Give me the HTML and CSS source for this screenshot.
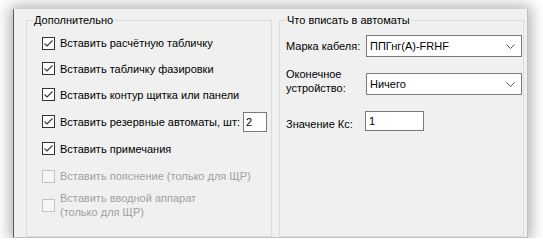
FILE: index.html
```html
<!DOCTYPE html>
<html lang="ru">
<head>
<meta charset="utf-8">
<link rel="stylesheet" href="styles.css">
</head>
<body>
<div class="frame">
  <fieldset class="group group-extra">
    <legend>Дополнительно</legend>
    <div class="rows">
      <div class="row"><span class="cb on"><svg viewBox="0 0 11 11"><polyline points="1.5,5.5 4,8 9.5,2.5"/></svg></span><span>Вставить расчётную табличку</span></div>
      <div class="row"><span class="cb on"><svg viewBox="0 0 11 11"><polyline points="1.5,5.5 4,8 9.5,2.5"/></svg></span><span>Вставить табличку фазировки</span></div>
      <div class="row"><span class="cb on"><svg viewBox="0 0 11 11"><polyline points="1.5,5.5 4,8 9.5,2.5"/></svg></span><span>Вставить контур щитка или панели</span></div>
      <div class="row"><span class="cb on"><svg viewBox="0 0 11 11"><polyline points="1.5,5.5 4,8 9.5,2.5"/></svg></span><span>Вставить резервные автоматы, шт:</span><span class="num">2</span></div>
      <div class="row"><span class="cb on"><svg viewBox="0 0 11 11"><polyline points="1.5,5.5 4,8 9.5,2.5"/></svg></span><span>Вставить примечания</span></div>
      <div class="row off"><span class="cb"></span><span>Вставить пояснение (только для ЩР)</span></div>
      <div class="row off"><span class="cb"></span><span>Вставить вводной аппарат<br>(только для ЩР)</span></div>
    </div>
  </fieldset>
  <fieldset class="group group-auto">
    <legend>Что вписать в автоматы</legend>
    <div class="form">
      <span class="lbl">Марка кабеля:</span>
      <div class="combo"><span>ППГнг(А)-FRHF</span><svg class="chev" viewBox="0 0 9 5"><polyline points="0.5,0.5 4.5,4.5 8.5,0.5"/></svg></div>
      <span class="lbl lbl-end">Оконечное<br>устройство:</span>
      <div class="combo"><span>Ничего</span><svg class="chev" viewBox="0 0 9 5"><polyline points="0.5,0.5 4.5,4.5 8.5,0.5"/></svg></div>
      <span class="lbl lbl-end">Значение Кс:</span>
      <div class="textbox">1</div>
    </div>
  </fieldset>
</div>
</body>
</html>
```

FILE: styles.css
```css
html, body {
  margin: 0;
  padding: 0;
  background: #ffffff;
}
body {
  font-family: "Liberation Sans", Arial, sans-serif;
  font-size: 11px;
  line-height: 14px;
  color: #000;
}
.frame {
  margin: 9px 0 0 13px;
  padding: 4px 3px 0 12px;
  background: #f0f0f0;
  border-left: 1px solid #5a5a5a;
  border-right: 1px solid #c0c0c0;
  border-bottom: 1px solid #c0c0c0;
  box-shadow: 0 0 14px 3px rgba(0, 0, 0, 0.32);
  display: flex;
  gap: 7px;
  box-sizing: border-box;
  width: 515px;
  height: 229px;
}
.group {
  margin: 0;
  padding: 0;
  border: 1px solid #dcdcdc;
  min-width: 0;
  box-sizing: border-box;
  height: 224px;
}
.group legend {
  margin-left: 6px;
  padding: 0 1px;
  line-height: 14px;
}
.group-extra { width: 246px; }
.group-auto { width: 245px; }

.rows {
  display: grid;
  grid-template-rows: 26px 25px 27px 27px 27px 28px 30px;
  padding: 3px 0 0 15px;
}
.row {
  display: flex;
  align-items: center;
}
.row.off { color: #a0a0a0; }
.cb {
  width: 13px;
  height: 13px;
  box-sizing: border-box;
  border: 1px solid #333333;
  background: #ffffff;
  margin-right: 5px;
  flex: none;
  display: flex;
}
.cb svg {
  width: 11px;
  height: 11px;
  fill: none;
  stroke: #333333;
  stroke-width: 1.1;
}
.row.off .cb {
  border-color: #c4c4c4;
  background: #f6f6f6;
}
.num {
  margin-left: 3px;
  width: 24px;
  height: 20px;
  box-sizing: border-box;
  border: 1px solid #7a7a7a;
  background: #fff;
  padding-left: 2px;
  line-height: 18px;
}

.form {
  display: grid;
  grid-template-columns: 80px 156px;
  grid-template-rows: 22px 22px 20px;
  row-gap: 16px;
  padding: 8px 0 0 6px;
}
.lbl { align-self: center; }
.lbl-end { align-self: end; }
.combo {
  border: 1px solid #7a7a7a;
  background: #fff;
  box-sizing: border-box;
  display: flex;
  align-items: center;
  justify-content: space-between;
  padding: 0 6px 0 3px;
}
.chev {
  width: 9px;
  height: 5px;
  fill: none;
  stroke: #555;
  stroke-width: 1;
}
.textbox {
  width: 59px;
  margin-left: -1px;
  border: 1px solid #7a7a7a;
  background: #fff;
  box-sizing: border-box;
  padding-left: 3px;
  line-height: 18px;
}
```
